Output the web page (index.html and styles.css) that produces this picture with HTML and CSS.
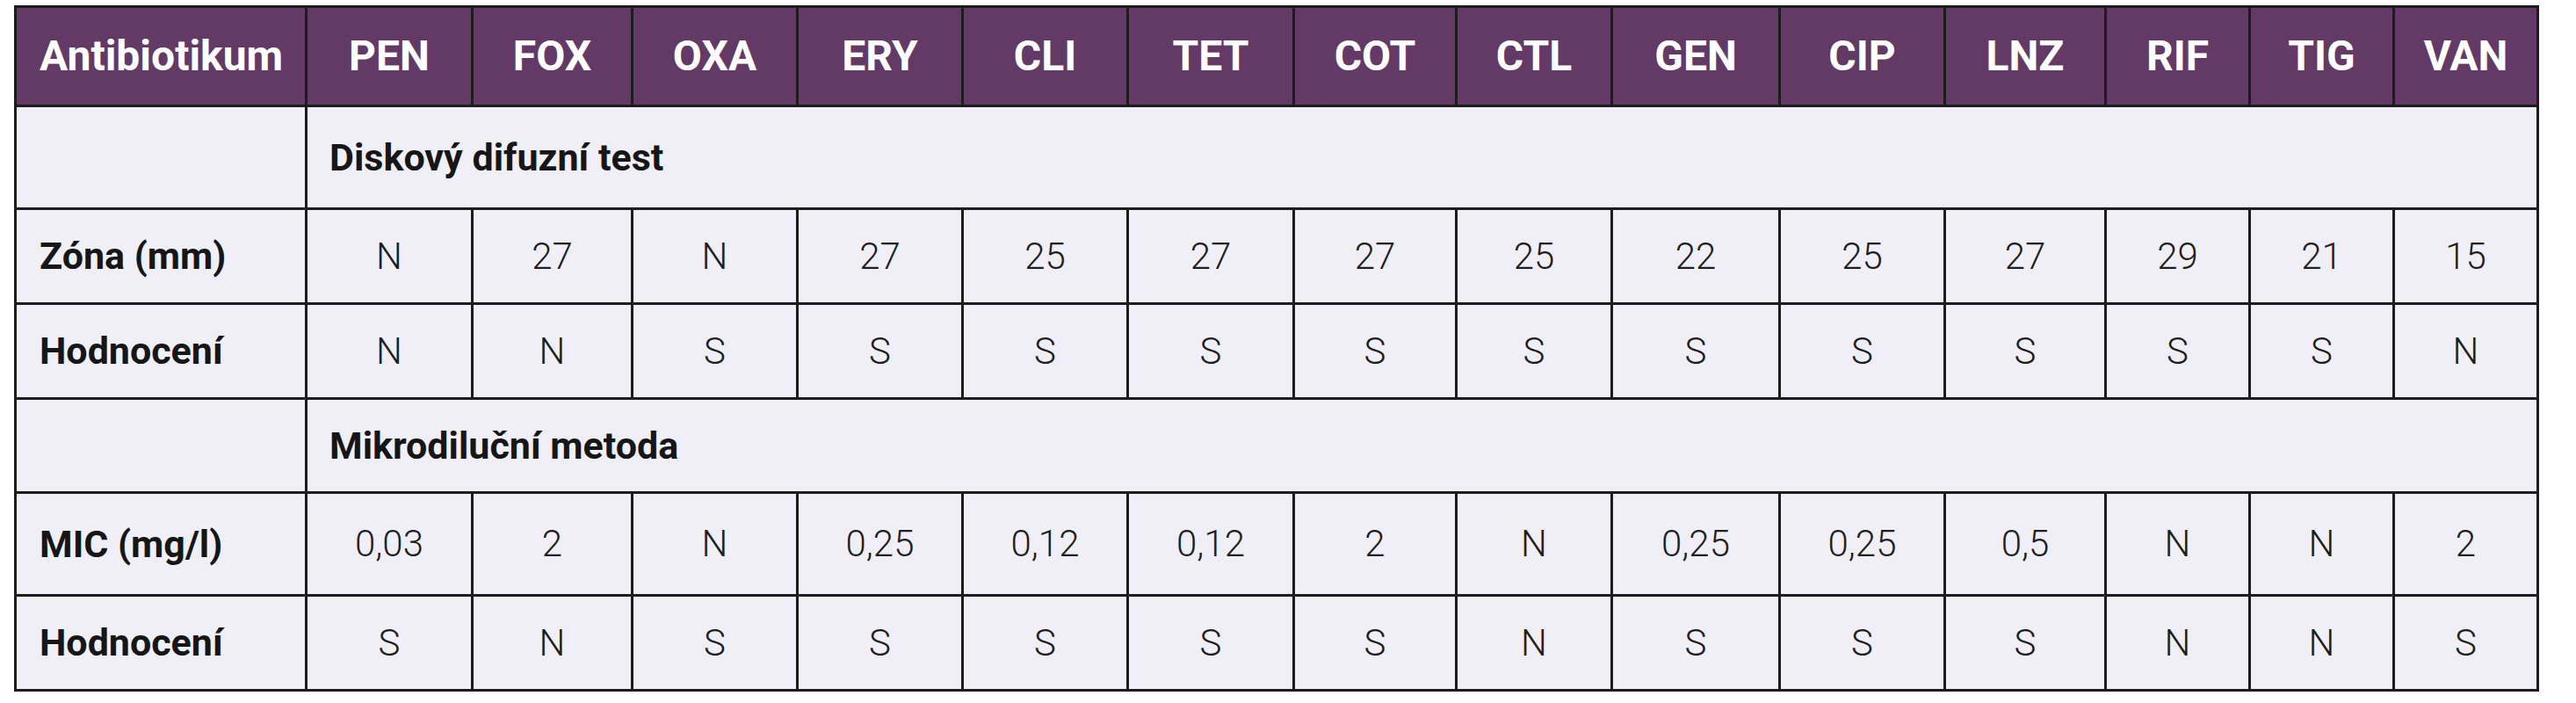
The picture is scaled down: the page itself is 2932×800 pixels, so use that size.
FILE: index.html
```html
<!DOCTYPE html>
<html lang="cs">
<head>
<meta charset="utf-8">
<title>Antibiotika</title>
<link rel="stylesheet" href="styles.css">
</head>
<body>
<table class="abx">
  <colgroup>
    <col class="c-label">
    <col class="c189"><col class="c182"><col class="c188"><col class="c188"><col class="c188"><col class="c189"><col class="c185"><col class="c177"><col class="c191"><col class="c188"><col class="c183"><col class="c164"><col class="c164"><col class="c164">
  </colgroup>
  <thead>
    <tr class="r-head">
      <th class="lbl">Antibiotikum</th>
      <th>PEN</th><th>FOX</th><th>OXA</th><th>ERY</th><th>CLI</th><th>TET</th><th>COT</th><th>CTL</th><th>GEN</th><th>CIP</th><th>LNZ</th><th>RIF</th><th>TIG</th><th>VAN</th>
    </tr>
  </thead>
  <tbody>
    <tr class="r-sec1">
      <td class="lbl"></td>
      <td class="sec" colspan="14">Diskový difuzní test</td>
    </tr>
    <tr class="r-data">
      <td class="lbl">Zóna (mm)</td>
      <td>N</td><td>27</td><td>N</td><td>27</td><td>25</td><td>27</td><td>27</td><td>25</td><td>22</td><td>25</td><td>27</td><td>29</td><td>21</td><td>15</td>
    </tr>
    <tr class="r-data">
      <td class="lbl">Hodnocení</td>
      <td>N</td><td>N</td><td>S</td><td>S</td><td>S</td><td>S</td><td>S</td><td>S</td><td>S</td><td>S</td><td>S</td><td>S</td><td>S</td><td>N</td>
    </tr>
    <tr class="r-sec2">
      <td class="lbl"></td>
      <td class="sec" colspan="14">Mikrodiluční metoda</td>
    </tr>
    <tr class="r-mic">
      <td class="lbl">MIC (mg/l)</td>
      <td>0,03</td><td>2</td><td>N</td><td>0,25</td><td>0,12</td><td>0,12</td><td>2</td><td>N</td><td>0,25</td><td>0,25</td><td>0,5</td><td>N</td><td>N</td><td>2</td>
    </tr>
    <tr class="r-data">
      <td class="lbl">Hodnocení</td>
      <td>S</td><td>N</td><td>S</td><td>S</td><td>S</td><td>S</td><td>S</td><td>N</td><td>S</td><td>S</td><td>S</td><td>N</td><td>N</td><td>S</td>
    </tr>
  </tbody>
</table>
</body>
</html>
```
FILE: styles.css
```css
html, body {
  margin: 0;
  padding: 0;
  background: #ffffff;
}

body {
  padding: 6px 0 0 16px;
  font-family: Roboto, "Liberation Sans", Arial, sans-serif;
}

.abx {
  border-collapse: collapse;
  table-layout: fixed;
  width: 2874px;
  background: #f0eff7;
  color: #1e1e1e;
}

.abx th,
.abx td {
  border: 3px solid #1c1c1c;
  padding: 0;
  text-align: center;
  vertical-align: middle;
  font-weight: 300;
  font-size: 42px;
  line-height: 1;
}

.c-label { width: 331px; }
.c189 { width: 189px; }
.c182 { width: 182px; }
.c188 { width: 188px; }
.c185 { width: 185px; }
.c177 { width: 177px; }
.c191 { width: 191px; }
.c183 { width: 183px; }
.c164 { width: 164px; }

.r-head th {
  background: #633965;
  color: #ffffff;
  font-weight: 700;
  font-size: 48px;
  height: 110px;
}

.r-head th.lbl {
  text-align: left;
  padding-left: 26px;
}

.abx td.lbl {
  text-align: left;
  padding-left: 26px;
  font-weight: 700;
  font-size: 43px;
  color: #161616;
}

.abx td.sec {
  text-align: left;
  padding-left: 25px;
  font-weight: 700;
  font-size: 43px;
  color: #161616;
}

.r-sec1 td { height: 114px; }
.r-data td { height: 105px; }
.r-sec2 td { height: 104px; }
.r-mic td { height: 114px; }
```
